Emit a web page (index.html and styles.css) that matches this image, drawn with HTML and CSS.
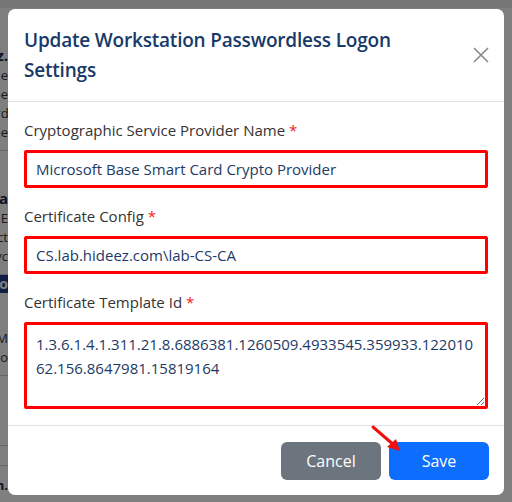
FILE: index.html
```html
<!DOCTYPE html>
<html lang="en">
<head>
<meta charset="utf-8">
<title>Update Workstation Passwordless Logon Settings</title>
<link rel="stylesheet" href="styles.css">
</head>
<body>
<div class="page">
  <div class="topbar"></div>
  <div class="side">
    <div class="side-block">
      <div class="side-title">Hideez.</div>
      <div class="side-text">Some type</div>
      <div class="side-text">Password</div>
      <div class="side-text">Scheme</div>
    </div>
    <div class="side-block">
      <div class="side-title">Data</div>
      <div class="side-text">Base E</div>
      <div class="side-text">Connect</div>
      <div class="side-text">Provc</div>
    </div>
    <div class="side-band">Info co</div>
    <div class="side-block">
      <div class="side-text">Base M</div>
      <div class="side-text">Cert Co</div>
    </div>
    <div class="side-block tall"></div>
    <div class="side-block short"></div>
    <div class="side-text bold">Admin.</div>
  </div>
</div>
<div class="backdrop"></div>
<div class="modal">
  <div class="modal-header">
    <h5 class="modal-title">Update Workstation Passwordless Logon Settings</h5>
    <button class="btn-close" type="button" aria-label="Close">
      <svg width="16" height="16" viewBox="0 0 16 16"><path d="M1 1 L15 15 M15 1 L1 15" stroke="#8a8a8a" stroke-width="1.6" fill="none"/></svg>
    </button>
  </div>
  <div class="modal-body">
    <div class="field">
      <label class="label">Cryptographic Service Provider Name <span class="req">*</span></label>
      <input class="control" type="text" value="Microsoft Base Smart Card Crypto Provider">
    </div>
    <div class="field">
      <label class="label">Certificate Config <span class="req">*</span></label>
      <input class="control" type="text" value="CS.lab.hideez.com\lab-CS-CA">
    </div>
    <div class="field last">
      <label class="label">Certificate Template Id <span class="req">*</span></label>
      <textarea class="control area">1.3.6.1.4.1.311.21.8.6886381.1260509.4933545.359933.12201062.156.8647981.15819164</textarea>
    </div>
  </div>
  <div class="modal-footer">
    <button class="btn btn-cancel" type="button">Cancel</button>
    <button class="btn btn-save" type="button">Save</button>
    <svg class="arrow" width="40" height="36" viewBox="0 0 40 36">
      <path d="M4 3 L26 22" stroke="#ee1111" stroke-width="3" stroke-linecap="round" fill="none"/>
      <path d="M31 27 L18 23 L27 15 Z" fill="#ee1111"/>
    </svg>
  </div>
</div>
</body>
</html>
```
FILE: styles.css
```css
* { box-sizing: border-box; }
html, body { margin: 0; padding: 0; }
body {
  width: 512px;
  height: 502px;
  overflow: hidden;
  background: #ffffff;
  font-family: "Open Sans", "Noto Sans", sans-serif;
  position: relative;
}
.page { display: flex; flex-direction: column; }
.topbar { height: 8px; background: #ececec; }
.side { margin-left: -50px; width: 200px; display: flex; flex-direction: column; }
.side-block { border-bottom: 1px solid #ccc; padding: 36px 0 8px; }
.side-block.tall { height: 70px; padding: 0; }
.side-block.short { height: 20px; padding: 0; }
.side-title { font-weight: 700; font-size: 15px; color: #1a2a44; line-height: 22px; text-align: right; padding-right: 142px; }
.side-text { font-size: 13px; line-height: 19px; color: #333; text-align: right; padding-right: 142px; }
.side-text.bold { font-weight: 700; color: #1a2a44; padding-top: 10px; }
.side-band { background: #1f3c88; color: #fff; font-weight: 700; font-size: 14px; line-height: 18px; text-align: right; padding-right: 142px; }
.backdrop { position: absolute; inset: 0; background: rgba(0,0,0,0.5); }
.modal {
  position: absolute;
  left: 8px;
  top: 9px;
  width: 496px;
  background: #fff;
  border-radius: 7px;
  display: flex;
  flex-direction: column;
}
.modal-header {
  display: flex;
  align-items: center;
  padding: 16px 7px 16px 16px;
  border-bottom: 1px solid #dee2e6;
}
.modal-title {
  margin: 0;
  flex: 1;
  font-size: 19px;
  line-height: 30px;
  font-weight: 600;
  letter-spacing: -0.2px;
  color: #173a69;
}
.btn-close {
  border: 0;
  background: transparent;
  width: 32px;
  height: 32px;
  padding: 0;
  display: flex;
  align-items: center;
  justify-content: center;
  margin-left: 24px;
}
.modal-body { padding: 16px; display: flex; flex-direction: column; gap: 16px; }
.field { display: flex; flex-direction: column; }
.label { font-size: 15px; line-height: 24px; color: #333; margin-bottom: 8px; }
.req { color: #ee2222; }
.control {
  width: 100%;
  height: 38px;
  border: 3px solid #ff0000;
  border-radius: 2px;
  padding: 4px 9px;
  font-family: inherit;
  font-size: 15px;
  line-height: 24px;
  color: #1d3a66;
  background: #fff;
  outline: none;
}
.area { height: 87px; resize: vertical; padding: 7px 5px 4px 9px; display: block; }
.modal-footer {
  position: relative;
  display: flex;
  justify-content: flex-end;
  gap: 8px;
  padding: 16px 15px 15px;
  border-top: 1px solid #dee2e6;
}
.btn {
  width: 100px;
  height: 38px;
  border: 0;
  border-radius: 6px;
  color: #fff;
  font-family: inherit;
  font-size: 16px;
}
.btn-cancel { background: #6c757d; }
.btn-save { background: #0d6efd; }
.arrow { position: absolute; left: 361px; top: -2px; }
```
